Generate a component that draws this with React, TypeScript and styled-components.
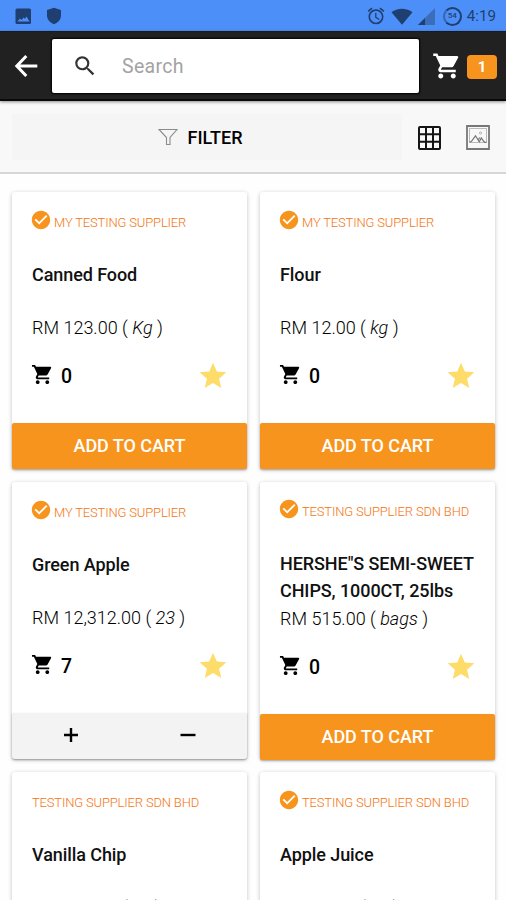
import React from "react";
import styled, { createGlobalStyle } from "styled-components";
import { MdAlarm, MdCheckCircle, MdSearch, MdShoppingCart, MdStar } from "react-icons/md";

const GlobalStyle = createGlobalStyle`
  * { box-sizing: border-box; }
  body { margin: 0; background: #fefefe; font-family: Roboto, "Noto Sans", sans-serif; color: #111; }
`;

const Screen = styled.div`
  width: 506px;
  height: 900px;
  overflow: hidden;
  display: flex;
  flex-direction: column;
  background: #fefefe;
`;

const StatusBar = styled.div`
  height: 31px;
  flex: none;
  display: flex;
  align-items: center;
  justify-content: space-between;
  padding: 1px 9px 0 15px;
  background: #4d8ff8;
  color: #1f3f70;
`;

const StatusGroup = styled.div<{ $gap: number }>`
  display: flex;
  align-items: center;
  gap: ${(p) => p.$gap}px;
  svg { display: block; }
`;

const Clock = styled.span`
  font-size: 15.2px;
  line-height: 18px;
  margin-right: 1px;
`;

const Header = styled.header`
  height: 70px;
  flex: none;
  display: flex;
  align-items: center;
  padding: 0 9px 0 14px;
  background: #212121;
  border-top: 1px solid #1a1a1a;
  border-bottom: 2px solid #0a0a0a;
  box-shadow: 0 1px 3px rgba(0, 0, 0, 0.45);
  z-index: 1;
  svg { display: block; }
`;

const SearchBox = styled.div`
  width: 367px;
  height: 54px;
  margin-left: 14px;
  display: flex;
  align-items: center;
  padding-left: 20px;
  gap: 24px;
  background: #fff;
  border-radius: 2px;
  box-shadow: 0 0 2px 1px #000;
  color: #333;
`;

const Placeholder = styled.span`
  font-size: 19.5px;
  letter-spacing: 0.3px;
  margin-top: 1px;
  color: #a3a3a3;
`;

const CartButton = styled.div`
  display: flex;
  align-items: center;
  gap: 5px;
  margin-left: 13px;
  color: #fff;
`;

const Badge = styled.span`
  width: 30px;
  height: 24px;
  margin-top: 3px;
  display: grid;
  place-items: center;
  background: #f7941e;
  border-radius: 4px;
  font-size: 15px;
  font-weight: 700;
`;

const Toolbar = styled.div`
  height: 73px;
  flex: none;
  display: flex;
  align-items: center;
  padding: 1px 16px 0 12px;
  background: #f8f8f8;
  border-bottom: 2px solid #d6d6d6;
  svg { display: block; }
`;

const FilterButton = styled.div`
  width: 390px;
  height: 46px;
  display: flex;
  align-items: center;
  justify-content: center;
  gap: 9px;
  padding-right: 13px;
  background: #f5f5f5;
  font-size: 18px;
  font-weight: 500;
  color: #000;
`;

const ViewButtons = styled.div`
  display: flex;
  gap: 25px;
  margin-left: 16px;
  padding-top: 1px;
  align-items: center;
`;

const Grid = styled.main`
  display: grid;
  grid-template-columns: 235px 235px;
  grid-template-rows: 277px 277px 277px;
  gap: 13px;
  padding: 18px 12px 0;
`;

const Card = styled.article`
  display: flex;
  flex-direction: column;
  background: #fff;
  border-radius: 3px;
  box-shadow: 0 1px 4px rgba(0, 0, 0, 0.24);
`;

const CardBody = styled.div<{ $raise: boolean }>`
  flex: 1;
  padding: ${(p) => (p.$raise ? 15 : 16)}px 18px 0 20px;
  white-space: nowrap;
`;

const Supplier = styled.div`
  height: 30px;
  margin-bottom: 23px;
  display: flex;
  gap: 2px;
  font-size: 13px;
  letter-spacing: -0.17px;
  font-weight: 300;
  line-height: 30px;
  color: #f57410;
  svg { flex: none; margin: 1px 0 0 -2px; color: #f7941e; }
`;

const Title = styled.h2`
  height: 54px;
  margin: 0;
  font-size: 18px;
  letter-spacing: -0.08px;
  font-weight: 500;
  line-height: 27px;
  white-space: pre-line;
  color: #111;
`;

const Price = styled.div<{ $lower: boolean }>`
  height: 27px;
  font-size: 18px;
  line-height: ${(p) => (p.$lower ? 29 : 26)}px;
  font-weight: 300;
  color: #000;
`;

const Meta = styled.div<{ $lower: boolean }>`
  display: flex;
  align-items: center;
  justify-content: space-between;
  height: 34px;
  margin-top: ${(p) => (p.$lower ? 19 : 17)}px;
  svg { display: block; }
`;

const Quantity = styled.div`
  display: flex;
  align-items: center;
  gap: 7px;
  margin-left: -1px;
  padding-top: 1px;
  font-size: 19.5px;
  font-weight: 500;
  color: #000;
  svg { margin-top: -5px; }
`;

const AddButton = styled.div<{ $lower: boolean }>`
  height: 46px;
  margin-bottom: ${(p) => (p.$lower ? -1 : 0)}px;
  padding-bottom: 1px;
  display: grid;
  place-items: center;
  background: #f7941e;
  border-radius: 2px;
  box-shadow: 0 1px 2px rgba(0, 0, 0, 0.25);
  color: #fff;
  font-size: 18px;
  letter-spacing: -0.05px;
  font-weight: 500;
`;

const Stepper = styled.div`
  height: 46px;
  display: grid;
  grid-template-columns: 1fr 1fr;
  place-items: center;
  padding-bottom: 3px;
  background: #f3f3f3;
  border-radius: 0 0 3px 3px;
  box-shadow: 0 1px 2px rgba(0, 0, 0, 0.3);
`;

const PictureStatusIcon = () => (
  <svg width="17" height="17" viewBox="0 0 17 17">
    <path d="M2 .5h12.500q1.500 0 1.500 1.500v12.500q0 1.500-1.500 1.500H2Q.5 16 .5 14.500V2Q.5.5 2 .5z" fill="currentColor" />
    <path d="M2.500 13.500l2.500-3 1.700 1.500 1.800-2.500 1.400 1.300 1.600-2.300 3 5z" fill="#4d8ff8" />
  </svg>
);

const ShieldIcon = () => (
  <svg width="16" height="18" viewBox="0 0 16 18">
    <path d="M8 .8L15 3v5.500c0 3.800-2.800 7-7 8.700C3.800 15.500 1 12.300 1 8.500V3z" fill="currentColor" />
  </svg>
);

const WifiIcon = () => (
  <svg width="22" height="17" viewBox="0 0 22 17">
    <path d="M.5 4.200C6-.5 16-.5 21.500 4.200L11 16.800z" fill="currentColor" />
  </svg>
);

const SignalIcon = () => (
  <svg width="17" height="17" viewBox="0 0 17 17">
    <path d="M17 0v17H0z" fill="#3c6db9" />
    <path d="M7 10v7H0z" fill="currentColor" />
  </svg>
);

const BatteryRing = styled.div`
  width: 19px;
  height: 19px;
  margin-left: 3px;
  border-radius: 50%;
  border: 2px solid #1f3f70;
  border-left-color: #3866ad;
  display: grid;
  place-items: center;
  font-size: 8px;
  font-weight: 500;
  line-height: 1;
`;

const BackIcon = () => (
  <svg width="24" height="24" viewBox="0 0 24 24" fill="none" stroke="#fff" strokeWidth="3">
    <path d="M12.300 2L2.800 12l9.500 10M3 12h20.300" />
  </svg>
);

const FunnelIcon = () => (
  <svg width="20" height="18" viewBox="0 0 20 18" fill="none" stroke="#8b8b8b" strokeWidth="1.100">
    <path d="M1 1.500h18L12 9.500v7H8.500v-7z" />
  </svg>
);

const GridIcon = () => (
  <svg width="23" height="24" viewBox="0 0 23 24" fill="none" stroke="#151515" strokeWidth="2">
    <rect x="1" y="1" width="21" height="22" rx="1" />
    <path d="M8 1v22M15 1v22M1 8.300h21M1 15.700h21" />
  </svg>
);

const GalleryIcon = () => (
  <svg width="24" height="25" viewBox="0 0 24 25" fill="none" stroke="#777">
    <path d="M1 1h22v23H1z" strokeWidth="1.800" />
    <path d="M3.500 3.500h17v14h-17z" strokeWidth=".8" stroke="#aaa" />
    <path d="M3.500 17.300l2-1 4-5.500 3.800 6 2-3.800 2.200 3 1.300 1.300h1.700M12 15l1.800-2.500" strokeWidth="1.200" />
    <circle cx="14.500" cy="8" r="1.100" strokeWidth=".7" stroke="#999" />
  </svg>
);

const SymbolIcon = ({ plus }: { plus?: boolean }) => (
  <svg width="16" height="16" viewBox="0 0 16 16" stroke="#000" strokeWidth="2.400">
    <path d={plus ? "M1 8h14M8 1v14" : "M.5 8h15"} />
  </svg>
);

type Product = {
  supplier: string;
  verified: boolean;
  title: string;
  price: string;
  unit: string;
  count: number;
  stepper?: boolean;
};

const products: Product[] = [
  { supplier: "MY TESTING SUPPLIER", verified: true, title: "Canned Food", price: "123.00", unit: "Kg", count: 0 },
  { supplier: "MY TESTING SUPPLIER", verified: true, title: "Flour", price: "12.00", unit: "kg", count: 0 },
  { supplier: "MY TESTING SUPPLIER", verified: true, title: "Green Apple", price: "12,312.00", unit: "23", count: 7, stepper: true },
  { supplier: "TESTING SUPPLIER SDN BHD", verified: true, title: "HERSHE\"S SEMI-SWEET\nCHIPS, 1000CT, 25lbs", price: "515.00", unit: "bags", count: 0 },
  { supplier: "TESTING SUPPLIER SDN BHD", verified: false, title: "Vanilla Chip", price: "123.00", unit: "kg", count: 0 },
  { supplier: "TESTING SUPPLIER SDN BHD", verified: true, title: "Apple Juice", price: "12.00", unit: "kg", count: 0 },
];

const ProductCard = ({ item }: { item: Product }) => {
  const long = item.title.includes("\n");
  return (
    <Card>
      <CardBody $raise={long}>
        <Supplier>
          {item.verified && <MdCheckCircle size={22} />}
          <span>{item.supplier}</span>
        </Supplier>
        <Title>{item.title}</Title>
        <Price $lower={long}>RM {item.price} ( <em>{item.unit}</em> )</Price>
        <Meta $lower={long}>
          <Quantity><MdShoppingCart size={23} />{item.count}</Quantity>
          <MdStar size={32} color="#fddc69" />
        </Meta>
      </CardBody>
      {item.stepper
        ? <Stepper><SymbolIcon plus /><SymbolIcon /></Stepper>
        : <AddButton $lower={long}>ADD TO CART</AddButton>}
    </Card>
  );
};

export default function App() {
  return (
    <Screen>
      <GlobalStyle />
      <StatusBar>
        <StatusGroup $gap={14}><PictureStatusIcon /><ShieldIcon /></StatusGroup>
        <StatusGroup $gap={5}>
          <MdAlarm size={20} /><WifiIcon /><SignalIcon /><BatteryRing>54</BatteryRing><Clock>4:19</Clock>
        </StatusGroup>
      </StatusBar>
      <Header>
        <BackIcon />
        <SearchBox><MdSearch size={26} /><Placeholder>Search</Placeholder></SearchBox>
        <CartButton><MdShoppingCart size={30} /><Badge>1</Badge></CartButton>
      </Header>
      <Toolbar>
        <FilterButton><FunnelIcon />FILTER</FilterButton>
        <ViewButtons><GridIcon /><GalleryIcon /></ViewButtons>
      </Toolbar>
      <Grid>{products.map((item) => <ProductCard key={item.title} item={item} />)}</Grid>
    </Screen>
  );
}
